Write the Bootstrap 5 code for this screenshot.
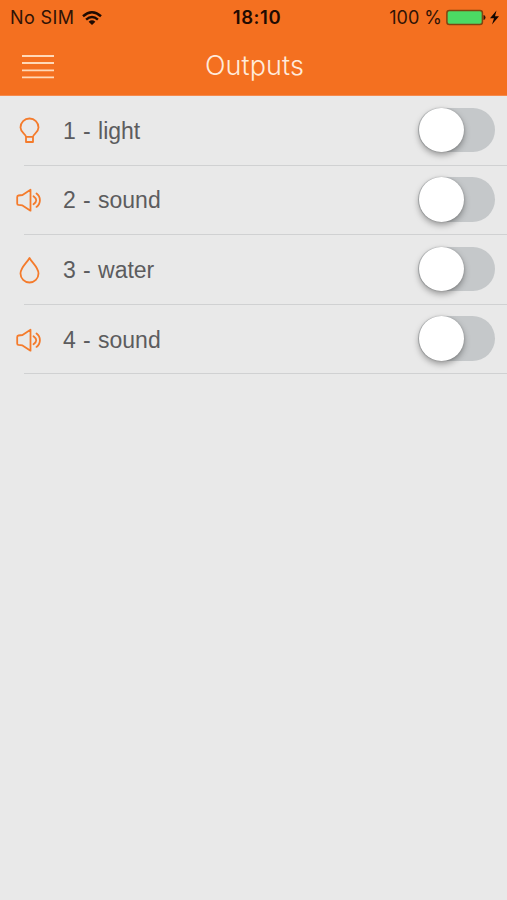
<!DOCTYPE html>
<html lang="en">
<head>
<meta charset="utf-8">
<meta name="viewport" content="width=device-width, initial-scale=1">
<title>Outputs</title>
<link href="https://cdn.jsdelivr.net/npm/bootstrap@5.3.0/dist/css/bootstrap.min.css" rel="stylesheet">
<style>
body{background:#e9e9e9;font-family:"Liberation Sans",Arial,sans-serif;overflow:hidden}
.app-top{background:#f47020;height:96px;border-bottom:1px solid #f58a4d}
.status-bar{height:35px;padding:0 7px 0 10px;font:400 18px/35px Inter,sans-serif;color:#301306}
.status-bar svg,.title-bar svg{display:block}
.carrier{letter-spacing:.4px}
.clock{font-weight:600;font-size:18.5px;letter-spacing:.6px;color:#1f0b02}
.title-bar{height:62px;padding-left:22px}
.title-bar h1{font:300 27px/60px Inter,sans-serif;color:#ffeadb;letter-spacing:.1px}
.side{flex:1 1 0}
.menu-btn{width:32px;height:25px;margin-top:1px}
.output-row{height:69.6px;padding:0 12px 0 16px;position:relative}
.output-row::after{content:"";position:absolute;left:24px;right:0;bottom:0;height:1px;background:#d0d1d2}
.output-row svg{width:28px;height:32px;fill:none;stroke:#f47b2c;stroke-width:1.8;stroke-linejoin:round;stroke-linecap:round}
.output-label{color:#5c5c5e;font-size:23px;line-height:30px;margin-left:19px;word-spacing:.9px}
.output-row .toggle{width:77px;height:44.5px;margin:0 0 2px;border:0;border-radius:23px;background:#c5c8ca;appearance:none;position:relative}
.toggle::before{content:"";position:absolute;left:1px;top:0;width:44.5px;height:44.5px;border-radius:50%;background:#fff;box-shadow:0 3px 6px rgba(0,0,0,.35),0 0 2px rgba(0,0,0,.2)}
</style>
<script src="https://cdn.jsdelivr.net/npm/bootstrap@5.3.0/dist/js/bootstrap.bundle.min.js"></script>
</head>
<body>
<header class="app-top">
  <div class="status-bar d-flex align-items-center">
    <div class="side d-flex align-items-center"><span class="carrier">No SIM</span>
      <svg class="ms-2" width="20" height="16" viewBox="0 0 20 16" fill="none" stroke="#1f0b02" stroke-width="2.5"><path d="M1 6.200Q10-1.600 19 6.200M4.100 9.600Q10 4.400 15.900 9.600"/><path d="M6.600 11.700Q10 8.800 13.400 11.700L10 15z" fill="#1f0b02" stroke="none"/></svg>
    </div>
    <span class="clock ps-1">18:10</span>
    <div class="side d-flex align-items-center justify-content-end"><span>100 %</span>
      <svg class="ms-1" width="54" height="18" viewBox="0 0 54 18"><rect x=".9" y="1.400" width="35.500" height="14.200" rx="2.500" fill="#4cd964" stroke="#81430f" stroke-width="1.500"/><path d="M37.500 6q2 .3 2 2.500t-2 2.500z" fill="#301306"/><path d="M50.500 1.500L44 9.300h4L46 15.500l7-8.300h-4z" fill="#130701"/></svg>
    </div>
  </div>
  <nav class="title-bar d-flex align-items-center">
    <div class="side"><button class="menu-btn btn p-0 border-0 d-block" aria-label="Menu"><svg width="32" height="25" viewBox="0 0 32 25" stroke="#ffd9b8" stroke-width="1.800"><path d="M0 2h32M0 9h32M0 16.300h32M0 23.300h32"/></svg></button></div>
    <h1 class="m-0">Outputs</h1>
    <div class="side" style="margin-right:20px"></div>
  </nav>
</header>
<main>
  <ul class="list-unstyled m-0">
    <li class="output-row d-flex align-items-center">
      <svg viewBox="0 0 28 32"><path d="M10 21.800C9.800 19 4.500 17.500 4.500 12.500a9 9 0 0 1 18 0C22.500 17.500 17.200 19 17 21.800zM10 21.800V27h7v-5.200"/></svg>
      <label class="output-label" for="o1">1 - light</label><input class="toggle form-check-input ms-auto" type="checkbox" id="o1">
    </li>
    <li class="output-row d-flex align-items-center">
      <svg viewBox="0 0 28 32"><path d="M1.200 13q0-1.300 1.300-1.500L6.500 11l8-5.300v21L6.500 21.400l-4-.5q-1.300-.2-1.300-1.500zM17.500 12.200Q23 16.200 17.500 20.200M20.500 9.500a8.300 8.300 0 0 1 0 13.400"/></svg>
      <label class="output-label" for="o2">2 - sound</label><input class="toggle form-check-input ms-auto" type="checkbox" id="o2">
    </li>
    <li class="output-row d-flex align-items-center">
      <svg viewBox="0 0 28 32"><path d="M13.500 4C11 8.700 4.500 13.500 4.500 19.500a9 9 0 0 0 18 0C22.500 13.500 16 8.700 13.500 4z"/></svg>
      <label class="output-label" for="o3">3 - water</label><input class="toggle form-check-input ms-auto" type="checkbox" id="o3">
    </li>
    <li class="output-row d-flex align-items-center">
      <svg viewBox="0 0 28 32"><path d="M1.200 13q0-1.300 1.300-1.500L6.500 11l8-5.300v21L6.500 21.400l-4-.5q-1.300-.2-1.300-1.500zM17.500 12.200Q23 16.200 17.500 20.200M20.500 9.500a8.300 8.300 0 0 1 0 13.400"/></svg>
      <label class="output-label" for="o4">4 - sound</label><input class="toggle form-check-input ms-auto" type="checkbox" id="o4">
    </li>
  </ul>
</main>
</body>
</html>
